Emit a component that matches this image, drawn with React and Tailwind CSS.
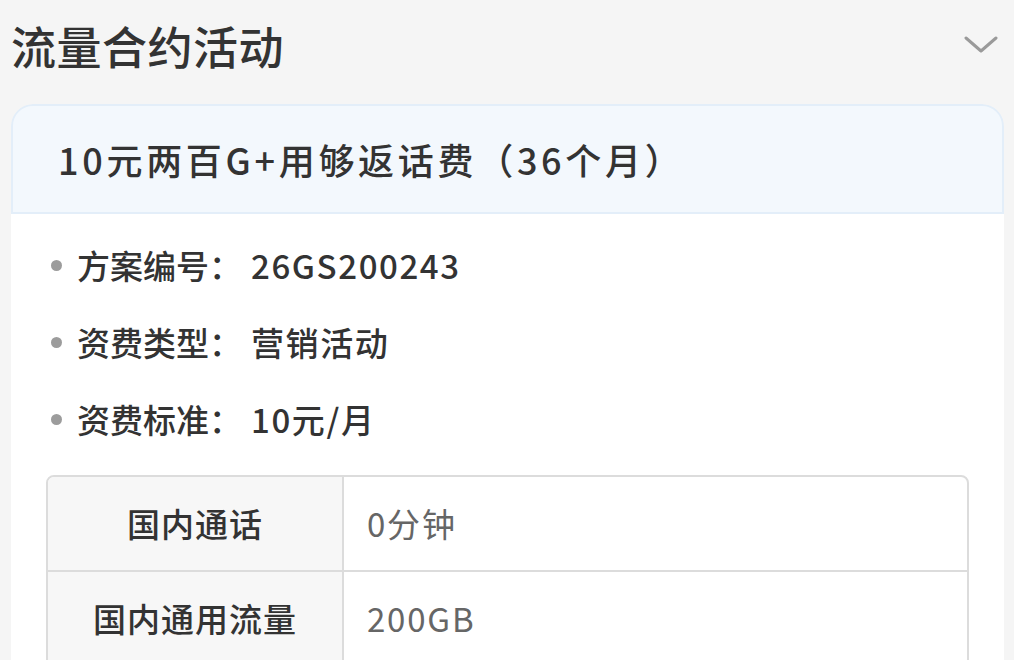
const info = [
  { label: '方案编号：', value: '26GS200243' },
  { label: '资费类型：', value: '营销活动' },
  { label: '资费标准：', value: '10元/月' },
]

const rows = [
  { name: '国内通话', amount: '0分钟' },
  { name: '国内通用流量', amount: '200GB' },
]

export default function App() {
  return (
    <div className="w-[1014px] h-[660px] overflow-hidden bg-[#f5f5f5] font-['Noto_Sans_CJK_SC','Noto_Sans',sans-serif] text-[#333]">
      {/* 标题栏 */}
      <div className="h-[90px] flex items-center justify-between pl-[11px] pr-[16px]">
        <h1 className="text-[45px] font-medium leading-none tracking-[0.5px]">流量合约活动</h1>
        <svg width="34" height="20" viewBox="0 0 34 20" fill="none">
          <path d="M2 3 L17 16 L32 3" stroke="#9a9a9a" strokeWidth="3" strokeLinecap="round" strokeLinejoin="round" />
        </svg>
      </div>

      {/* 活动卡片 */}
      <div className="mt-[14px] ml-[11px] mr-[10px] rounded-t-[22px] overflow-hidden">
        <div className="h-[110px] bg-[#f3f8fd] border-2 border-[#e3eef9] rounded-t-[22px] flex items-center pl-[45px]">
          <span className="text-[36px] font-medium leading-none tracking-[3.7px]">10元两百G+用够返话费（36个月）</span>
        </div>
        <div className="bg-white pt-[13px] px-[35px] pb-[20px]">
          {info.map(item => (
            <div key={item.label} className="h-[77px] flex items-center">
              <span className="w-[11px] h-[11px] rounded-full bg-[#9c9c9c] ml-[5px] mr-[15px]"></span>
              <span className="text-[33px] font-medium leading-none">{item.label}</span>
              <span className="text-[33px] font-medium leading-none ml-[9px] tracking-[1.6px]">{item.value}</span>
            </div>
          ))}

          {/* 套餐内容表格 */}
          <div className="mt-[17px] border-2 border-[#dcdcdc] rounded-[8px] overflow-hidden">
            {rows.map((r, i) => (
              <div key={r.name} className={`flex h-[93px] ${i > 0 ? 'border-t-2 border-[#dcdcdc] h-[95px]' : ''}`}>
                <div className="w-[296px] shrink-0 bg-[#f7f7f7] border-r-2 border-[#dcdcdc] flex items-center justify-center text-[33px] font-medium tracking-[1px]">
                  {r.name}
                </div>
                <div className="flex-1 flex items-center pl-[23px] text-[33px] text-[#666] tracking-[1.8px]">{r.amount}</div>
              </div>
            ))}
          </div>
        </div>
      </div>
    </div>
  )
}
